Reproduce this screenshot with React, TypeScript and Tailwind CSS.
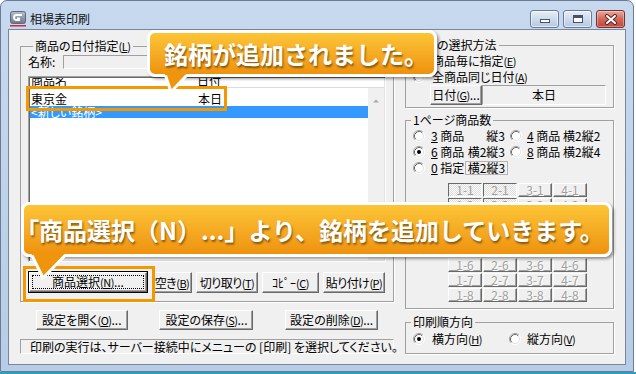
import React from "react";

function Radio({ checked = false }: { checked?: boolean }) {
  return (
    <svg width="12" height="12" viewBox="0 0 12 12" className="shrink-0">
      <circle cx="6" cy="6" r="5" fill="#fff" />
      <path d="M2.11 9.89 A5.5 5.5 0 0 1 9.89 2.11" fill="none" stroke="#a0a0a0" />
      <path d="M9.89 2.11 A5.5 5.5 0 0 1 2.11 9.89" fill="none" stroke="#fff" />
      <path d="M2.82 9.18 A4.5 4.5 0 0 1 9.18 2.82" fill="none" stroke="#696969" />
      <path d="M9.18 2.82 A4.5 4.5 0 0 1 2.82 9.18" fill="none" stroke="#e3e3e3" />
      {checked && <circle cx="6" cy="6" r="2" fill="#000" />}
    </svg>
  );
}

function Btn({ className = "", children }: { className?: string; children?: React.ReactNode }) {
  return (
    <div
      className={`flex shrink-0 items-center justify-center whitespace-nowrap border border-b-[#696969] border-l-white border-r-[#696969] border-t-white bg-[#f0f0f0] shadow-[inset_-1px_-1px_0_#a0a0a0] ${className}`}
    >
      {children}
    </div>
  );
}

// mnemonic in parentheses, set a touch narrower like the system font
function Key({ k }: { k: string }) {
  return (
    <span className="text-[11px] tracking-[-0.5px]">
      (<u>{k}</u>)
    </span>
  );
}

function Group({ className = "", label, children }: { className?: string; label: React.ReactNode; children?: React.ReactNode }) {
  return (
    <fieldset className={`border border-[#a0a0a0] shadow-[1px_1px_0_#fff] ${className}`}>
      <legend className="ml-[5px] px-[2px] leading-[12px]">{label}</legend>
      {children}
    </fieldset>
  );
}

const sunken = "border border-b-white border-l-[#a0a0a0] border-r-white border-t-[#a0a0a0]";

export default function App() {
  const cells: { r: number; c: number; on: boolean }[] = [];
  for (let r = 1; r <= 8; r++) for (let c = 1; c <= 4; c++) cells.push({ r, c, on: c <= 2 && r <= 3 });

  return (
    <div className="relative h-[374px] w-[636px] overflow-hidden bg-white font-['Noto_Sans_CJK_JP','Noto_Sans',sans-serif] text-[12px] leading-[12px] text-black [font-feature-settings:'palt']">
      {/* window */}
      <div className="flex h-[372px] w-[634px] flex-col rounded-t-[7px] border border-[#6a7c94] bg-gradient-to-b from-[#c7d9ef] to-[#b7cce6]">
        {/* title bar */}
        <div className="flex h-[28px] items-start">
          <svg width="16" height="16" viewBox="0 0 16 16" className="ml-[9px] mt-[10px]">
            <defs>
              <linearGradient id="ic" x1="0" y1="0" x2="0" y2="1">
                <stop offset="0" stopColor="#b3bdcc" />
                <stop offset="1" stopColor="#6b7990" />
              </linearGradient>
            </defs>
            <rect x="0.5" y="0.5" width="15" height="12" rx="2" fill="url(#ic)" stroke="#5c687c" />
            <path d="M12 4H6.5Q4 4 4 6.5Q4 9 6.5 9H9V7.5H7" fill="none" stroke="#fff" strokeWidth="1.8" />
            <rect x="0" y="14" width="16" height="1.5" fill="#cc2f2f" />
          </svg>
          <span className="ml-[4px] mt-[12px] text-[12px] text-[#111] [font-feature-settings:normal]">相場表印刷</span>
          <div className="ml-auto mr-[8px] mt-[9px] flex gap-[4px]">
            <div className="flex h-[18px] w-[29px] items-center justify-center rounded-[3px] border border-[#6a7a92] bg-gradient-to-b from-[#e6eef8] to-[#b4c8e2] shadow-[inset_0_0_0_1px_rgba(255,255,255,0.6)]">
              <div className="mt-[3px] h-[4px] w-[10px] border border-[#44526a] bg-white" />
            </div>
            <div className="flex h-[18px] w-[29px] items-center justify-center rounded-[3px] border border-[#6a7a92] bg-gradient-to-b from-[#e6eef8] to-[#b4c8e2] shadow-[inset_0_0_0_1px_rgba(255,255,255,0.6)]">
              <div className="h-[8px] w-[10px] border border-[#44526a] bg-white shadow-[inset_0_2px_0_#44526a,inset_0_0_0_1px_#fff]" />
            </div>
            <div className="flex h-[18px] w-[29px] items-center justify-center rounded-[3px] border border-[#7a2f2a] bg-gradient-to-b from-[#eaa89b] via-[#d0685a] to-[#c2463a] shadow-[inset_0_0_0_1px_rgba(255,255,255,0.35)]">
              <svg width="14" height="11" viewBox="0 0 14 11">
                <path d="M3 2L11 9M11 2L3 9" stroke="#5a2a26" strokeWidth="4" strokeLinecap="round" />
                <path d="M3 2L11 9M11 2L3 9" stroke="#fff" strokeWidth="2" strokeLinecap="round" />
              </svg>
            </div>
          </div>
        </div>

        {/* client */}
        <div className="mx-[7px] mb-[6px] flex flex-1 border border-[#7b8799] bg-[#f0f0f0] pl-[11px]">
          {/* left column */}
          <div className="w-[374px] pt-[10px]">
            <Group className="h-[262px] px-[7px]" label={<>商品の日付指定<Key k="L" /></>}>
              <div className="mt-[3px] flex h-[14px] items-center">
                <span className="w-[35px]">名称:</span>
                <div className={`h-[14px] flex-1 ${sunken}`} />
              </div>

              <div className="mt-[7px] flex h-[186px] flex-col border border-b-white border-l-[#a0a0a0] border-r-white border-t-[#a0a0a0] p-[1px] shadow-[inset_1px_1px_0_#696969,inset_-1px_-1px_0_#e3e3e3]">
                <div className="flex h-[10px] items-end overflow-hidden border-b border-[#dcdcdc] bg-white">
                  <span className="w-[166px] pl-[1px]">商品名</span>
                  <span className="pl-[1px]">日付</span>
                </div>
                <div className="flex flex-1 bg-white">
                  <div className="flex-1 pt-[4px]">
                    <div className="flex h-[14px] items-center">
                      <span className="w-[167px] pl-[1px]">東京金</span>
                      <span className="pl-[1px]">本日</span>
                    </div>
                    <div className="flex h-[12px] items-center bg-[#3399ff] pl-[1px] text-white">&lt;新しい銘柄&gt;</div>
                  </div>
                  <div className="flex w-[16px] flex-col justify-between bg-[#f0f0f0] pb-[4px] pt-[10px]">
                    <svg width="16" height="5" viewBox="0 0 16 5">
                      <path d="M5 4.5L8 1.5L11 4.5Z" fill="#a8a8a8" />
                    </svg>
                    <svg width="16" height="5" viewBox="0 0 16 5">
                      <path d="M5 0.5L8 3.5L11 0.5Z" fill="#a8a8a8" />
                    </svg>
                  </div>
                </div>
              </div>

              <div className="mt-[9px] flex items-end gap-[4px]">
                <div className="flex h-[22px] w-[120px] shrink-0 border border-black">
                  <Btn className="flex-1 self-stretch">
                    <div className="m-[2px] flex flex-1 items-center justify-center self-stretch border border-dotted border-black">
                      商品選択<Key k="N" />...
                    </div>
                  </Btn>
                </div>
                <Btn className="h-[21px] w-[40px] tracking-[-0.5px]">空き<Key k="B" /></Btn>
                <Btn className="h-[21px] w-[62px] tracking-[-0.5px]">切り取り<Key k="T" /></Btn>
                <Btn className="h-[21px] w-[57px]">ｺﾋﾟｰ<Key k="C" /></Btn>
                <Btn className="h-[21px] w-[62px] tracking-[-0.5px]">貼り付け<Key k="P" /></Btn>
              </div>
            </Group>

            <div className="mt-[8px] flex justify-around">
              <Btn className="h-[20px] w-[92px]">設定を開く<Key k="O" />...</Btn>
              <Btn className="h-[20px] w-[94px]">設定の保存<Key k="S" />...</Btn>
              <Btn className="h-[20px] w-[93px]">設定の削除<Key k="D" />...</Btn>
            </div>

            <div className={`mt-[9px] flex h-[15px] items-center whitespace-nowrap pl-[9px] ${sunken}`}>
              印刷の実行は、サーバー接続中にメニューの [印刷] を選択してください。
            </div>
          </div>

          {/* right column */}
          <div className="ml-[11px] w-[209px] pt-[9px]">
            <Group className="h-[69px]" label="日付の選択方法">
              <div className="mt-[2px] flex h-[16px] items-center gap-[7px] pl-[7px]">
                <Radio checked />
                <span>商品毎に指定<Key k="E" /></span>
              </div>
              <div className="flex h-[16px] items-center gap-[7px] pl-[7px]">
                <Radio />
                <span>全商品同じ日付<Key k="A" /></span>
              </div>
              <div className="flex h-[20px] pl-[24px]">
                <Btn className="h-[20px] w-[52px]">日付<Key k="G" />...</Btn>
                <div className={`flex h-[20px] w-[124px] items-center justify-center ${sunken}`}>本日</div>
              </div>
            </Group>

            <Group className="mt-[6px] h-[195px]" label="1ページ商品数">
              <div className="mt-[2px] flex h-[16px] items-center pl-[7px]">
                <div className="flex w-[97px] items-center">
                  <Radio />
                  <div className="ml-[6px] flex w-[74px] justify-between whitespace-nowrap">
                    <span><u>3</u> 商品</span>
                    <span>縦3</span>
                  </div>
                </div>
                <Radio />
                <span className="ml-[5px] whitespace-nowrap"><u>4</u> 商品 横2縦2</span>
              </div>
              <div className="flex h-[16px] items-center pl-[7px]">
                <div className="flex w-[97px] items-center">
                  <Radio checked />
                  <div className="ml-[6px] flex w-[74px] justify-between whitespace-nowrap">
                    <span><u>6</u> 商品</span>
                    <span>横2縦3</span>
                  </div>
                </div>
                <Radio />
                <span className="ml-[5px] whitespace-nowrap"><u>8</u> 商品 横2縦4</span>
              </div>
              <div className="flex h-[16px] items-center pl-[7px]">
                <Radio />
                <span className="ml-[6px] w-[34px] whitespace-nowrap"><u>0</u> 指定</span>
                <div className="flex h-[14px] w-[43px] items-center justify-center whitespace-nowrap border border-[#b4b4b4]">横2縦3</div>
              </div>

              <div className="ml-[42px] mt-[7px] grid w-[139px] grid-cols-[repeat(4,34px)] gap-[1px]">
                {cells.map((cell) => (
                  <div
                    key={`${cell.c}-${cell.r}`}
                    className={
                      cell.on
                        ? "flex h-[14px] items-center justify-center border border-b-white border-l-[#696969] border-r-white border-t-[#696969] bg-[repeating-conic-gradient(#ffffff_0_25%,#dcdcdc_0_50%)] bg-[length:2px_2px] text-[#a0a0a0]"
                        : "flex h-[14px] items-center justify-center border border-b-[#696969] border-l-white border-r-[#696969] border-t-white bg-[#f0f0f0] text-[#a0a0a0] shadow-[inset_-1px_-1px_0_#a0a0a0] [text-shadow:1px_1px_0_#fff]"
                    }
                  >
                    {cell.c}-{cell.r}
                  </div>
                ))}
              </div>
            </Group>

            <Group className="mt-[7px] h-[38px]" label="印刷順方向">
              <div className="mt-[3px] flex h-[16px] items-center pl-[7px]">
                <div className="flex w-[96px] items-center gap-[7px]">
                  <Radio checked />
                  <span>横方向<Key k="H" /></span>
                </div>
                <div className="flex items-center gap-[6px]">
                  <Radio />
                  <span>縦方向<Key k="V" /></span>
                </div>
              </div>
            </Group>
          </div>
        </div>
      </div>
      <div className="h-[2px] w-[636px] bg-[#2b9fbc]" />

      {/* highlight frames */}
      <div className="absolute left-[26px] top-[86px] h-[25px] w-[201px] border-[3px] border-[#f39800]" />
      <div className="absolute left-[23px] top-[266px] h-[36px] w-[132px] border-[3px] border-[#f39800]" />

      {/* callout 1 */}
      <div className="absolute left-[147px] top-[30px] flex h-[47px] w-[290px] items-center rounded-[8px] border-[3px] border-white bg-gradient-to-b from-[#fcc536] to-[#ee920c] pl-[14px] text-[24px] font-bold leading-[24px] text-white shadow-[2px_2px_3px_rgba(0,0,0,0.4)] [font-feature-settings:normal] [text-shadow:1px_2px_2px_rgba(0,0,0,0.45)]">
        銘柄が追加されました。
      </div>
      <svg className="absolute left-[155px] top-[66px]" width="40" height="30" viewBox="0 0 40 30">
        <polygon points="9.5,7 32.5,7 16,26" fill="#ef940d" />
        <polyline points="10.5,9.5 16,26 31.5,9.5" fill="none" stroke="#fff" strokeWidth="3" strokeLinejoin="miter" />
      </svg>

      {/* callout 2 */}
      <div className="absolute left-[21px] top-[202px] flex h-[55px] w-[591px] items-center whitespace-nowrap rounded-[8px] border-[3px] border-white bg-gradient-to-b from-[#fcc536] to-[#ee920c] pl-[3px] text-[24px] font-bold leading-[24px] text-white shadow-[2px_2px_3px_rgba(0,0,0,0.4)] [font-feature-settings:normal] [text-shadow:1px_2px_2px_rgba(0,0,0,0.45)]">
        <span className="[font-feature-settings:'palt']">「</span>商品選択（N）...」より、銘柄を追加していきます。
      </div>
      <svg className="absolute left-[25px] top-[250px]" width="50" height="32" viewBox="0 0 50 32">
        <polygon points="5.5,2 41.5,2 18,28" fill="#ef940d" />
        <polyline points="7,5.5 18,28 40,5.5" fill="none" stroke="#fff" strokeWidth="3" strokeLinejoin="miter" />
      </svg>
    </div>
  );
}
